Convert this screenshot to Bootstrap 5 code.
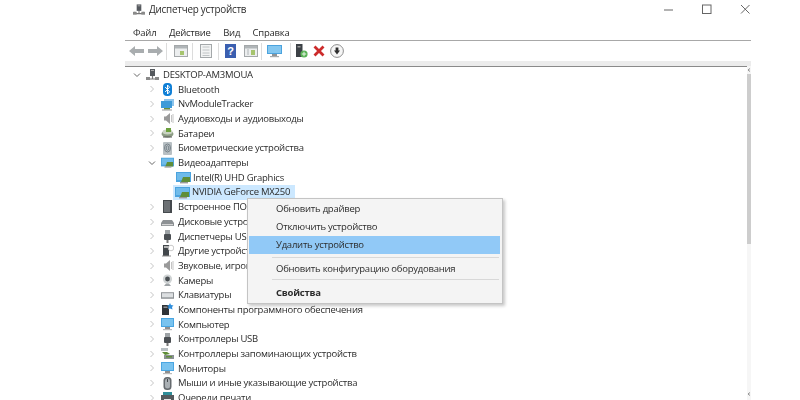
<!DOCTYPE html>
<html lang="ru">
<head>
<meta charset="utf-8">
<title>Диспетчер устройств</title>
<link href="https://cdn.jsdelivr.net/npm/bootstrap@5.3.0/dist/css/bootstrap.min.css" rel="stylesheet">
<style>
html,body{margin:0;height:400px;overflow:hidden;background:#fff}
body{font-family:"Open Sans","Noto Sans",sans-serif;font-size:9.5px;letter-spacing:-.24px;color:#2b2b2b;line-height:1}
.dm-win{width:626px;height:400px;margin-left:125px;position:relative;overflow:hidden;filter:blur(.35px)}
.dm-title{height:19px;padding-left:8px;font-size:9.9px}
.dm-title svg{width:12px;height:13px;margin-right:4px}
.dm-ctl{position:absolute;top:4px;right:0;width:100%;height:11px}
.dm-ctl svg{position:absolute;top:0;width:11px;height:11px}
.dm-menu{height:22px;padding:8.5px 0 0 8px;gap:12.5px;border-bottom:1px solid #a8a8a8}
.dm-tools{height:20px;padding-left:4px}
.dm-tools svg{flex:none;height:14px;width:14px}
.dm-sep{flex:none;width:1px;height:17px;background:#dcdcdc}
.dm-band{background:#ececec;border-bottom:1px solid #8a8a8a;height:6px}
.dm-tree{padding-top:.4px}
.dm-row{height:14.7px;white-space:nowrap}
.dm-chev{flex:none;width:8px;height:8px;margin-right:5px}
.dm-ico{flex:none;width:13px;height:13px;margin-right:4px}
.lv0{padding-left:8px}
.lv1{padding-left:23px}
.lv2{padding-left:51px}
.lv2 .dm-ico{width:15px;height:13px;margin-right:2px}
.dm-sel{background:#cce8ff;padding:1px 5px 1px 2px;margin-left:-3px}
.dm-track{position:absolute;right:0;top:66px;bottom:0;width:4px;background:#f6f6f6;padding-top:8px}
.dm-arrow{position:absolute;left:0;width:4px;height:4px}
.dm-arrow-up{top:2px}
.dm-arrow-down{bottom:4px}
.dm-thumb{height:170px;background:#cdcdcd}
.dm-ctx{position:absolute;left:122px;top:198px;width:256px;height:106px;background:#f4f4f4;border:1px solid #c4c4c4;box-shadow:2px 2px 3px rgba(0,0,0,.22);padding-top:1px}
.dm-item{height:18px;padding-left:27px;margin:0 2px 0 1px}
.dm-hot{background:#91c9f7}
.dm-line{height:1px;background:#d8d8d8;margin:3px 3px 0 24px}
.dm-line2{height:1px;background:#d8d8d8;margin:1px 3px 0 24px}
.dm-gap{height:2px}
.dm-gap2{height:4px}
.dm-bold{font-weight:700}
</style>
</head>
<body>
<svg width="0" height="0" class="d-none">
<defs>
<symbol id="i-chev" viewBox="0 0 8 8"><path d="M2.5 1l3 3-3 3" fill="none" stroke="#c4c4c4" stroke-width="1"/></symbol>
<symbol id="i-open" viewBox="0 0 8 8"><path d="M1 2.5l3 3 3-3" fill="none" stroke="#666" stroke-width="1"/></symbol>
<symbol id="i-pc" viewBox="0 0 13 13"><rect x="4" y="1" width="5" height="7" fill="#55595e"/><rect x="5" y="2" width="3" height="1" fill="#aaa"/><path d="M0 11h13M2 9v2M11 9v2M6.5 8v3" stroke="#777" stroke-width="1.2"/><rect x="0" y="9" width="4" height="3" fill="#8a8a8a"/><rect x="9" y="9" width="4" height="3" fill="#8a8a8a"/></symbol>
<symbol id="i-bt" viewBox="0 0 13 13"><rect x="2" y="0" width="9" height="13" rx="4" fill="#0f7fd6"/><path d="M4.2 4l4.4 4.8-2.1 2.2V2l2.1 2.2L4.2 9" fill="none" stroke="#fff" stroke-width="1"/></symbol>
<symbol id="i-net" viewBox="0 0 13 13"><rect x="3" y="1" width="10" height="7" fill="#8cc4ec"/><rect x="0" y="3" width="11" height="7" fill="#3d9ad8"/><rect x="3" y="10" width="6" height="1.5" fill="#6b8f3a"/><rect x="1" y="11.5" width="10" height="1" fill="#9a9a9a"/></symbol>
<symbol id="i-spk" viewBox="0 0 13 13"><path d="M3 4.5h2L9 1v11L5 8.5H3z" fill="#9a9a9a"/><path d="M10.5 3v7M12 2v9" stroke="#c4c4c4"/></symbol>
<symbol id="i-bat" viewBox="0 0 13 13"><ellipse cx="6.5" cy="7" rx="6" ry="3.4" fill="#8c9c84"/><ellipse cx="6.5" cy="5" rx="5" ry="2.4" fill="#c9d3c2"/><path d="M5 1h5v4H5z" fill="#6ca03d"/><path d="M2 10h9" stroke="#555"/></symbol>
<symbol id="i-bio" viewBox="0 0 13 13"><rect x="2" y="0" width="9" height="13" rx="1" fill="#b8c0c4"/><ellipse cx="6.5" cy="6" rx="3" ry="4" fill="none" stroke="#78838a"/><ellipse cx="6.5" cy="6" rx="1.3" ry="2.3" fill="none" stroke="#78838a"/></symbol>
<symbol id="i-mon" viewBox="0 0 15 13"><rect x="0" y="1" width="15" height="10" fill="#4ba3de"/><rect x="1" y="2" width="13" height="7" fill="#6fbbea"/><path d="M7 6l7 0 0 5H5z" fill="#5f8e38"/><rect x="4" y="11" width="8" height="1.4" fill="#9a9a9a"/></symbol>
<symbol id="i-fw" viewBox="0 0 13 13"><rect x="2" y="0" width="9" height="13" fill="#45494d"/><path d="M4 1v11M6 1v11M8 1v11" stroke="#a9adb1" stroke-width=".8"/></symbol>
<symbol id="i-disk" viewBox="0 0 13 13"><path d="M2 5h9l2 3v3H0V8z" fill="#8d9194"/><rect x="1" y="9" width="11" height="1.2" fill="#d4d4d4"/></symbol>
<symbol id="i-usb" viewBox="0 0 13 13"><rect x="4" y="0" width="5" height="4" fill="#9ea3a6"/><rect x="3" y="4" width="7" height="6" rx="1" fill="#4b4f53"/><rect x="5.5" y="10" width="2" height="3" fill="#777"/></symbol>
<symbol id="i-other" viewBox="0 0 13 13"><rect x="2" y="1" width="6" height="11" fill="#42474b"/><rect x="3" y="2" width="4" height="2" fill="#b5b5b5"/><circle cx="10" cy="4" r="2.8" fill="none" stroke="#c9c9c9"/><path d="M1 12h9" stroke="#8c8c8c"/></symbol>
<symbol id="i-cam" viewBox="0 0 13 13"><circle cx="6.5" cy="5" r="4.6" fill="#cfd3d4"/><circle cx="6.5" cy="5" r="2.4" fill="#4a4f53"/><path d="M3 12h7l-2-2.5H5z" fill="#9ea3a6"/></symbol>
<symbol id="i-kbd" viewBox="0 0 14 13"><rect x="0" y="3" width="14" height="7" fill="#8a8f93"/><rect x="1" y="4" width="12" height="4.5" fill="#dcdfe1"/></symbol>
<symbol id="i-soft" viewBox="0 0 13 13"><rect x="1" y="2" width="7" height="10" fill="#2f3337"/><rect x="2.5" y="3.5" width="4" height="1.5" fill="#8b8f93"/><path d="M9 0l1 2 2.5.5L11 4l.5 2.5L9 5.5 7 6l.5-2.5L6 2.5 8 2z" fill="#2f8edc"/></symbol>
<symbol id="i-pcmon" viewBox="0 0 13 13"><rect x="0" y="0" width="13" height="9" fill="#4aa6e2"/><rect x="1" y="1" width="11" height="7" fill="#79c3ef"/><rect x="4" y="9" width="5" height="2" fill="#8f8f8f"/><rect x="2" y="11" width="9" height="1.2" fill="#bbb"/></symbol>
<symbol id="i-stor" viewBox="0 0 13 13"><path d="M0 1h7v3H0z" fill="#b8bfc3"/><path d="M1 5l5 0 3 2-5 1z" fill="#5f8e38"/><rect x="3" y="8" width="10" height="4" fill="#8b9094"/><rect x="5" y="9" width="6" height="1.5" fill="#5f8e38"/></symbol>
<symbol id="i-mouse" viewBox="0 0 13 13"><rect x="2.5" y="0" width="8" height="13" rx="3.5" fill="#656a6e"/><rect x="4" y="1.5" width="5" height="10" rx="2.5" fill="#aab0b4"/><rect x="6" y="2" width="1" height="3" fill="#45494d"/></symbol>
<symbol id="i-print" viewBox="0 0 13 13"><rect x="2" y="1" width="9" height="3" fill="#2f8e9a"/><rect x="0" y="4" width="13" height="6" fill="#555a5e"/><rect x="3" y="8" width="7" height="5" fill="#e6e6e6"/></symbol>
</defs>
</svg>

<div class="dm-win">
  <div class="dm-title d-flex align-items-center">
    <svg viewBox="0 0 13 13"><use href="#i-pc"/></svg><span>Диспетчер устройств</span>
  </div>
  <div class="dm-ctl">
    <svg style="left:539px" viewBox="0 0 11 11"><path d="M0 6h9" stroke="#666" stroke-width="1"/></svg>
    <svg style="left:577px" viewBox="0 0 11 11"><rect x=".5" y="1" width="8.5" height="8.5" fill="none" stroke="#666" stroke-width="1"/></svg>
    <svg style="left:615px" viewBox="0 0 11 11"><path d="M1 1l8.5 8.5M9.5 1L1 9.5" stroke="#555" stroke-width=".9"/></svg>
  </div>
  <div class="dm-menu d-flex">
    <span>Файл</span><span>Действие</span><span>Вид</span><span>Справка</span>
  </div>
  <div class="dm-tools d-flex align-items-center">
    <svg style="width:15px" viewBox="0 0 15 12"><path d="M0 6l6-5v3h9v4H6v3z" fill="#a9adaf"/></svg>
    <svg style="width:15px;margin-left:4px" viewBox="0 0 15 12"><path d="M15 6L9 1v3H0v4h9v3z" fill="#a9adaf"/></svg>
    <span class="dm-sep" style="margin-left:3px"></span>
    <svg style="margin-left:7px" viewBox="0 0 14 14"><rect x=".5" y="1.5" width="13" height="11" fill="#eceeef" stroke="#a4a8aa"/><rect x="1" y="2" width="12" height="2.5" fill="#b0b5b8"/><rect x="6" y="7" width="4" height="4" fill="#a6c46e"/></svg>
    <span class="dm-sep" style="margin-left:4px"></span>
    <svg style="margin-left:6px" viewBox="0 0 14 14"><rect x="1.5" y=".5" width="11" height="13" fill="#f2f3f3" stroke="#a4a8aa"/><path d="M3.5 3h7M3.5 6h7M3.5 9h7M3.5 11.5h7" stroke="#c0c4c6"/></svg>
    <span class="dm-sep" style="margin-left:5px"></span>
    <svg style="margin-left:6px;width:12px" viewBox="0 0 12 14"><rect x="0" y="0" width="11" height="14" fill="#3b5fb0"/><text x="5.5" y="11" text-anchor="middle" font-size="11" font-weight="700" fill="#fff" font-family="Liberation Sans,sans-serif">?</text></svg>
    <svg style="margin-left:7px" viewBox="0 0 14 14"><rect x=".5" y="1.5" width="13" height="11" fill="#eceeef" stroke="#a4a8aa"/><rect x="1" y="2" width="12" height="2.5" fill="#b0b5b8"/><rect x="7" y="6" width="4" height="5" fill="#a6c46e"/><path d="M3 6h2M3 8h2M3 10h2" stroke="#b0b5b8"/></svg>
    <span class="dm-sep" style="margin-left:3px"></span>
    <svg style="margin-left:5px;width:15px" viewBox="0 0 15 14"><rect x="0" y="1" width="15" height="9" fill="#4ba3de"/><rect x="1" y="2" width="13" height="7" fill="#84c7f0"/><rect x="5" y="10" width="5" height="2" fill="#8f9396"/><rect x="3" y="12" width="9" height="1.2" fill="#a8acae"/></svg>
    <span class="dm-sep" style="margin-left:8px"></span>
    <svg style="margin-left:5px;width:12px" viewBox="0 0 12 14"><rect x="0" y="0" width="6.5" height="13" fill="#3c4146"/><rect x="1.5" y="2" width="3" height="1.5" fill="#999"/><circle cx="8" cy="10" r="3.6" fill="#58b255"/><path d="M8 7.8v4.4M5.8 10h4.4" stroke="#e8f5e6"/></svg>
    <svg style="margin-left:5px;width:12px;height:12px" viewBox="0 0 12 12"><path d="M1.5 1.5l9 9M10.5 1.5l-9 9" stroke="#cc2b2b" stroke-width="2.8"/></svg>
    <svg style="margin-left:5px" viewBox="0 0 14 14"><circle cx="7" cy="7" r="6.4" fill="#f6f6f6" stroke="#8e8e8e"/><path d="M5.6 3.4h2.8v3.2H10L7 10.4 4 6.6h1.6z" fill="#2f2f2f"/></svg>
  </div>
  <div class="dm-band"></div>

  <div class="dm-tree">
    <div class="dm-row lv0 d-flex align-items-center"><svg class="dm-chev"><use href="#i-open"/></svg><svg class="dm-ico"><use href="#i-pc"/></svg><span>DESKTOP-AM3MOUA</span></div>
    <div class="dm-row lv1 d-flex align-items-center"><svg class="dm-chev"><use href="#i-chev"/></svg><svg class="dm-ico"><use href="#i-bt"/></svg><span>Bluetooth</span></div>
    <div class="dm-row lv1 d-flex align-items-center"><svg class="dm-chev"><use href="#i-chev"/></svg><svg class="dm-ico"><use href="#i-net"/></svg><span>NvModuleTracker</span></div>
    <div class="dm-row lv1 d-flex align-items-center"><svg class="dm-chev"><use href="#i-chev"/></svg><svg class="dm-ico"><use href="#i-spk"/></svg><span>Аудиовходы и аудиовыходы</span></div>
    <div class="dm-row lv1 d-flex align-items-center"><svg class="dm-chev"><use href="#i-chev"/></svg><svg class="dm-ico"><use href="#i-bat"/></svg><span>Батареи</span></div>
    <div class="dm-row lv1 d-flex align-items-center"><svg class="dm-chev"><use href="#i-chev"/></svg><svg class="dm-ico"><use href="#i-bio"/></svg><span>Биометрические устройства</span></div>
    <div class="dm-row lv1 d-flex align-items-center"><svg class="dm-chev"><use href="#i-open"/></svg><svg class="dm-ico"><use href="#i-mon"/></svg><span>Видеоадаптеры</span></div>
    <div class="dm-row lv2 d-flex align-items-center"><svg class="dm-ico"><use href="#i-mon"/></svg><span>Intel(R) UHD Graphics</span></div>
    <div class="dm-row lv2 d-flex align-items-center"><span class="dm-sel d-flex align-items-center"><svg class="dm-ico"><use href="#i-mon"/></svg><span>NVIDIA GeForce MX250</span></span></div>
    <div class="dm-row lv1 d-flex align-items-center"><svg class="dm-chev"><use href="#i-chev"/></svg><svg class="dm-ico"><use href="#i-fw"/></svg><span>Встроенное ПО</span></div>
    <div class="dm-row lv1 d-flex align-items-center"><svg class="dm-chev"><use href="#i-chev"/></svg><svg class="dm-ico"><use href="#i-disk"/></svg><span>Дисковые устройства</span></div>
    <div class="dm-row lv1 d-flex align-items-center"><svg class="dm-chev"><use href="#i-chev"/></svg><svg class="dm-ico"><use href="#i-usb"/></svg><span>Диспетчеры USB</span></div>
    <div class="dm-row lv1 d-flex align-items-center"><svg class="dm-chev"><use href="#i-chev"/></svg><svg class="dm-ico"><use href="#i-other"/></svg><span>Другие устройства</span></div>
    <div class="dm-row lv1 d-flex align-items-center"><svg class="dm-chev"><use href="#i-chev"/></svg><svg class="dm-ico"><use href="#i-spk"/></svg><span>Звуковые, игровые</span></div>
    <div class="dm-row lv1 d-flex align-items-center"><svg class="dm-chev"><use href="#i-chev"/></svg><svg class="dm-ico"><use href="#i-cam"/></svg><span>Камеры</span></div>
    <div class="dm-row lv1 d-flex align-items-center"><svg class="dm-chev"><use href="#i-chev"/></svg><svg class="dm-ico"><use href="#i-kbd"/></svg><span>Клавиатуры</span></div>
    <div class="dm-row lv1 d-flex align-items-center"><svg class="dm-chev"><use href="#i-chev"/></svg><svg class="dm-ico"><use href="#i-soft"/></svg><span>Компоненты программного обеспечения</span></div>
    <div class="dm-row lv1 d-flex align-items-center"><svg class="dm-chev"><use href="#i-chev"/></svg><svg class="dm-ico"><use href="#i-pcmon"/></svg><span>Компьютер</span></div>
    <div class="dm-row lv1 d-flex align-items-center"><svg class="dm-chev"><use href="#i-chev"/></svg><svg class="dm-ico"><use href="#i-usb"/></svg><span>Контроллеры USB</span></div>
    <div class="dm-row lv1 d-flex align-items-center"><svg class="dm-chev"><use href="#i-chev"/></svg><svg class="dm-ico"><use href="#i-stor"/></svg><span>Контроллеры запоминающих устройств</span></div>
    <div class="dm-row lv1 d-flex align-items-center"><svg class="dm-chev"><use href="#i-chev"/></svg><svg class="dm-ico"><use href="#i-pcmon"/></svg><span>Мониторы</span></div>
    <div class="dm-row lv1 d-flex align-items-center"><svg class="dm-chev"><use href="#i-chev"/></svg><svg class="dm-ico"><use href="#i-mouse"/></svg><span>Мыши и иные указывающие устройства</span></div>
    <div class="dm-row lv1 d-flex align-items-center"><svg class="dm-chev"><use href="#i-chev"/></svg><svg class="dm-ico"><use href="#i-print"/></svg><span>Очереди печати</span></div>
  </div>

  <div class="dm-track">
    <svg class="dm-arrow dm-arrow-up" viewBox="0 0 4 4"><path d="M3 .5L1 2l2 1.5" fill="none" stroke="#777" stroke-width=".8"/></svg>
    <div class="dm-thumb"></div>
    <svg class="dm-arrow dm-arrow-down" viewBox="0 0 4 4"><path d="M3 .5L1 2l2 1.5" fill="none" stroke="#777" stroke-width=".8"/></svg>
  </div>

  <div class="dm-ctx">
    <div class="dm-item d-flex align-items-center">Обновить драйвер</div>
    <div class="dm-item d-flex align-items-center">Отключить устройство</div>
    <div class="dm-item dm-hot d-flex align-items-center">Удалить устройство</div>
    <div class="dm-line"></div>
    <div class="dm-gap"></div>
    <div class="dm-item d-flex align-items-center">Обновить конфигурацию оборудования</div>
    <div class="dm-line2"></div>
    <div class="dm-gap2"></div>
    <div class="dm-item dm-bold d-flex align-items-center">Свойства</div>
  </div>
</div>
</body>
</html>
